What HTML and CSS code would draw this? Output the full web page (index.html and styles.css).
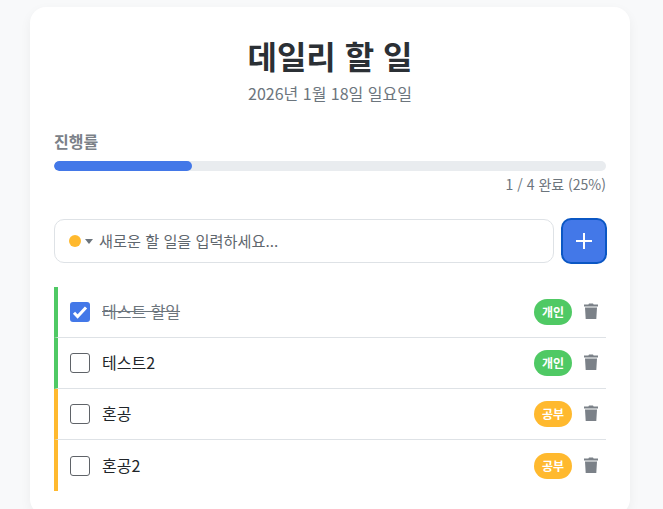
FILE: index.html
```html
<!DOCTYPE html>
<html lang="ko">
<head>
    <meta charset="UTF-8">
    <meta name="viewport" content="width=device-width, initial-scale=1.0">
    <title>데일리 할 일</title>
    <link rel="stylesheet" href="styles.css">
</head>
<body>

    <div class="container">
        <div class="header">
            <h1>데일리 할 일</h1>
            <p class="date">2026년 1월 18일 일요일</p>
        </div>

        <div class="progress">
            <div class="progress-label">진행률</div>
            <div class="progress-track"><div class="progress-fill" style="width: 25%"></div></div>
            <div class="progress-text">1 / 4 완료 (25%)</div>
        </div>

        <form class="add-form">
            <div class="input-box">
                <span class="dot"></span>
                <span class="caret"></span>
                <input type="text" class="task-input" placeholder="새로운 할 일을 입력하세요...">
            </div>
            <button type="button" class="add-btn" aria-label="추가">
                <svg width="16" height="16" viewBox="0 0 16 16"><path d="M8 0v16M0 8h16" stroke="#fff" stroke-width="2"/></svg>
            </button>
        </form>

        <ul class="task-list">
            <li class="task personal done">
                <span class="check checked">
                    <svg width="20" height="20" viewBox="0 0 20 20"><path d="M4 10.800l3.600 3.800L16 5.400" fill="none" stroke="#fff" stroke-width="3"/></svg>
                </span>
                <span class="task-name">테스트 할일</span>
                <span class="badge">개인</span>
                <svg class="trash" width="14" height="16" viewBox="0 0 14 16"><path d="M0 1.600h4.400L5 .4h4l.6 1.200H14v1.800H0zM1 4.400h12l-.7 11.600H1.700z"/></svg>
            </li>
            <li class="task personal">
                <span class="check"></span>
                <span class="task-name">테스트2</span>
                <span class="badge">개인</span>
                <svg class="trash" width="14" height="16" viewBox="0 0 14 16"><path d="M0 1.600h4.400L5 .4h4l.6 1.200H14v1.800H0zM1 4.400h12l-.7 11.600H1.700z"/></svg>
            </li>
            <li class="task study">
                <span class="check"></span>
                <span class="task-name">혼공</span>
                <span class="badge">공부</span>
                <svg class="trash" width="14" height="16" viewBox="0 0 14 16"><path d="M0 1.600h4.400L5 .4h4l.6 1.200H14v1.800H0zM1 4.400h12l-.7 11.600H1.700z"/></svg>
            </li>
            <li class="task study">
                <span class="check"></span>
                <span class="task-name">혼공2</span>
                <span class="badge">공부</span>
                <svg class="trash" width="14" height="16" viewBox="0 0 14 16"><path d="M0 1.600h4.400L5 .4h4l.6 1.200H14v1.800H0zM1 4.400h12l-.7 11.600H1.700z"/></svg>
            </li>
        </ul>
    </div>

</body>
</html>
```

FILE: styles.css
```css
* { box-sizing: border-box; }
body { margin: 0; background: #f8f9fa; font-family: "Noto Sans CJK KR", "Noto Sans", sans-serif; color: #212529; }
.container { width: 600px; margin: 7px 0 0 30px; padding: 24px; background: #fff; border-radius: 16px; box-shadow: 0 4px 12px rgba(0, 0, 0, 0.05); }

.header { text-align: center; margin-bottom: 26px; }
h1 { margin: 0 0 3px; font-size: 32px; line-height: 48px; font-weight: 700; color: #2b3035; }
.date { margin: 0; font-size: 16px; line-height: 22px; color: #6c757d; }

.progress { margin-bottom: 24px; }
.progress-label { font-size: 16px; line-height: 22px; font-weight: 700; color: #7b8188; margin-bottom: 9px; }
.progress-track { height: 10px; background: #e9ecef; border-radius: 5px; overflow: hidden; }
.progress-fill { height: 100%; background: #4378e8; border-radius: 5px; }
.progress-text { text-align: right; font-size: 14px; line-height: 20px; margin-top: 3px; color: #6c757d; }

.add-form { display: flex; align-items: center; gap: 7px; margin-bottom: 23px; }
.input-box { flex: 1; height: 44px; display: flex; align-items: center; padding: 0 14px; border: 1px solid #dee2e6; border-radius: 10px; }
.dot { width: 12px; height: 12px; border-radius: 50%; background: #ffb92e; }
.caret { width: 0; height: 0; margin: 0 6px 0 4px; border: 4.5px solid transparent; border-top: 5px solid #6c757d; border-bottom: 0; }
.task-input { flex: 1; min-width: 0; border: none; outline: none; padding: 0 0 3px; font: inherit; font-size: 15.2px; color: #212529; }
.task-input::placeholder { color: #5f676e; opacity: 1; }
.add-btn { width: 46px; height: 46px; margin-right: -1px; display: flex; align-items: center; justify-content: center; padding: 0; background: #4378e8; border: 2px solid #0b57c4; border-radius: 10px; }

.task-list { list-style: none; margin: 0; padding: 0; }
.task { height: 51px; display: flex; align-items: center; padding: 0 8px 0 12px; border-left: 4px solid; border-bottom: 1px solid #dee2e6; }
.task:last-child { border-bottom: none; }
.personal { border-left-color: #4fc964; }
.study { border-left-color: #ffb92e; }

.check { width: 20px; height: 20px; flex: none; border: 1px solid #5f6368; border-radius: 3px; }
.check.checked { background: #4378e8; border: none; }
.check svg { display: block; }
.task-name { flex: 1; margin-left: 12px; padding-bottom: 2px; font-size: 16px; }
.done .task-name { color: #6c757d; text-decoration: line-through; }
.badge { width: 38px; height: 26px; line-height: 25px; text-align: center; border-radius: 13px; color: #fff; font-size: 12px; font-weight: 700; }
.personal .badge { background: #4fc964; }
.study .badge { background: #ffb92e; }
.trash { margin-left: 12px; fill: #7b8188; margin-top: -2px; }
```
